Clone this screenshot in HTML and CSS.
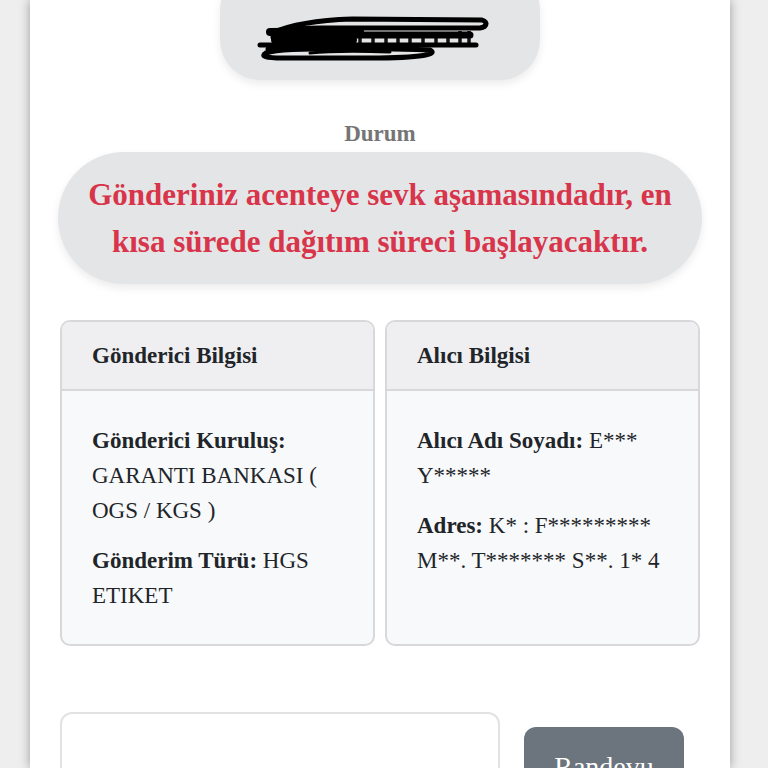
FILE: index.html
```html
<!DOCTYPE html>
<html lang="tr">
<head>
<meta charset="utf-8">
<title>Gönderi Takip</title>
<link rel="stylesheet" href="styles.css">
</head>
<body>
<main class="page">
  <div class="code-pill">
    <svg class="scribble" viewBox="0 0 320 110" width="320" height="110" aria-hidden="true">
      <g fill="none" stroke="#111" stroke-width="3.5">
        <path d="M140 62 v14 M153 62 v14 M166 62 v14 M178 62 v14 M190 62 v14 M203 62 v14 M216 62 v14 M228 62 v14 M240 61 v15 M249 61 v15"/>
      </g>
      <g fill="none" stroke="#000" stroke-linecap="round" stroke-linejoin="round">
        <path d="M52 63 C72 54 100 50 132 49 L262 50 C268 52 267 57 260 58 L100 58 C80 58 70 60 60 62" stroke-width="5"/>
        <path d="M50 62 L140 61" stroke-width="8"/>
        <path d="M54 67 C80 66 110 65 142 65 L250 65" stroke-width="7"/>
        <path d="M56 70 L132 70" stroke-width="10"/>
        <path d="M40 75 L256 75" stroke-width="5"/>
        <path d="M48 79 L150 79" stroke-width="5"/>
        <path d="M46 83 C62 78 120 77 210 80 C218 84 204 88 150 88 L62 88 C46 88 40 86 46 83" stroke-width="5"/>
        <path d="M90 83 C110 81 140 81 170 82" stroke-width="3"/>
      </g>
    </svg>
  </div>

  <h2 class="status-label">Durum</h2>
  <div class="status-pill">
    <p class="status-text">Gönderiniz acenteye sevk aşamasındadır, en kısa sürede dağıtım süreci başlayacaktır.</p>
  </div>

  <section class="cards">
    <article class="card">
      <header class="card-head">Gönderici Bilgisi</header>
      <div class="card-body">
        <p><strong>Gönderici Kuruluş:</strong> GARANTI BANKASI ( OGS / KGS )</p>
        <p><strong>Gönderim Türü:</strong> HGS ETIKET</p>
      </div>
    </article>
    <article class="card">
      <header class="card-head">Alıcı Bilgisi</header>
      <div class="card-body">
        <p><strong>Alıcı Adı Soyadı:</strong> E*** Y*****</p>
        <p><strong>Adres:</strong> K* : F********* M**. T******* S**. 1* 4</p>
      </div>
    </article>
  </section>

  <div class="appointment">
    <div class="field"></div>
    <button class="btn" type="button">Randevu</button>
  </div>
</main>
</body>
</html>
```

FILE: styles.css
```css
html, body {
  margin: 0;
  padding: 0;
  height: 100%;
  overflow: hidden;
}
body {
  background: #eeeeee;
  font-family: "Liberation Serif", "Times New Roman", serif;
  color: #212529;
}
.page {
  width: 700px;
  height: 768px;
  overflow: hidden;
  margin-left: 30px;
  background: #ffffff;
  box-shadow: 0 0 10px rgba(0, 0, 0, 0.35);
  padding: 0 30px;
  box-sizing: border-box;
  display: flex;
  flex-direction: column;
}
.code-pill {
  align-self: center;
  flex-shrink: 0;
  width: 320px;
  height: 110px;
  margin-top: -30px;
  border-radius: 40px;
  background: #e4e5e7;
  box-shadow: 0 4px 8px rgba(0, 0, 0, 0.08);
  overflow: hidden;
}
.scribble {
  display: block;
}
.status-label {
  margin: 39px 0 0;
  text-align: center;
  font-size: 23px;
  line-height: 30px;
  font-weight: bold;
  color: #757575;
}
.status-pill {
  flex-shrink: 0;
  margin: 3px -2px 0 -2px;
  background: #e4e5e7;
  border-radius: 66px;
  padding: 19px 24px;
  box-shadow: 0 4px 8px rgba(0, 0, 0, 0.08);
}
.status-text {
  margin: 0;
  text-align: center;
  color: #d8344a;
  font-weight: bold;
  font-size: 31px;
  line-height: 47px;
}
.cards {
  flex-shrink: 0;
  margin-top: 36px;
  display: grid;
  grid-template-columns: 1fr 1fr;
  gap: 10px;
}
.card {
  border: 2px solid #d8d8da;
  border-radius: 10px;
  background: #f8f9fa;
  overflow: hidden;
  display: flex;
  flex-direction: column;
}
.card-head {
  background: #efeff1;
  border-bottom: 2px solid #d8d8da;
  padding: 16px 30px;
  font-weight: bold;
  font-size: 23px;
  line-height: 35px;
}
.card-body {
  padding: 32px 30px 31px;
  font-size: 23px;
  line-height: 35px;
  flex: 1;
}
.card-body p {
  margin: 0 0 15px;
}
.card-body p:last-child {
  margin-bottom: 0;
}
.appointment {
  flex-shrink: 0;
  margin-top: 66px;
  display: flex;
  align-items: flex-start;
  gap: 24px;
}
.field {
  width: 440px;
  height: 90px;
  border: 2px solid #e2e2e2;
  border-radius: 12px;
  box-sizing: border-box;
}
.btn {
  margin-top: 15px;
  width: 160px;
  height: 80px;
  border: none;
  border-radius: 12px;
  background: #6c757d;
  color: #ffffff;
  font-family: "Liberation Serif", "Times New Roman", serif;
  font-size: 28px;
  padding: 0;
  line-height: 80px;
}
```
